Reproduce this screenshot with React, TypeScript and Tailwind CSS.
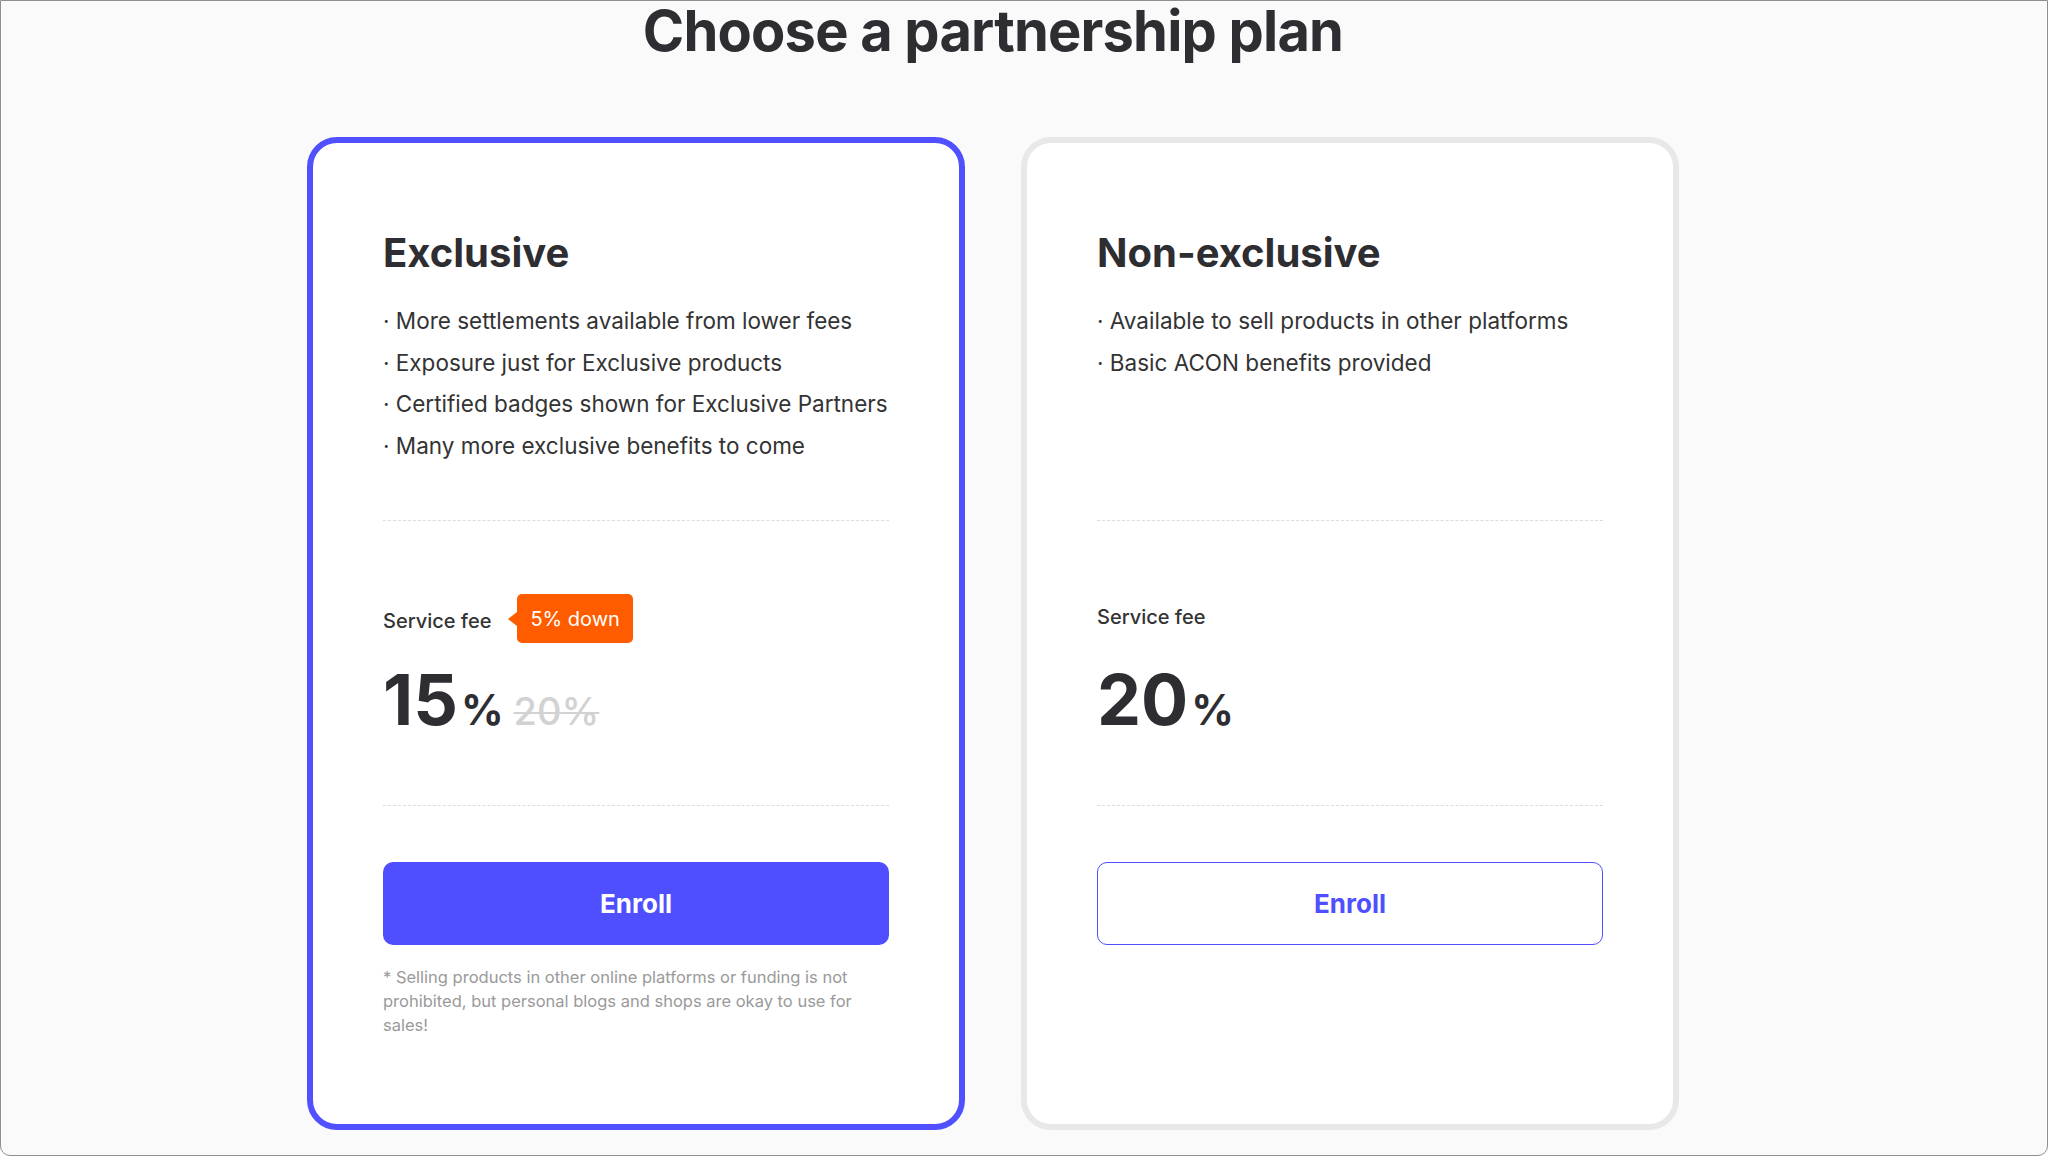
const exclusivePerks = [
  'More settlements available from lower fees',
  'Exposure just for Exclusive products',
  'Certified badges shown for Exclusive Partners',
  'Many more exclusive benefits to come',
];

const basicPerks = ['Available to sell products in other platforms', 'Basic ACON benefits provided'];

interface PlanCardProps {
  title: string;
  perks: string[];
  fee: string;
  oldFee?: string;
  discount?: string;
  selected?: boolean;
  note?: React.ReactNode;
}

function PlanCard({ title, perks, fee, oldFee, discount, selected, note }: PlanCardProps) {
  return (
    <div
      className={`w-[658px] rounded-[30px] border-[6px] bg-white px-[70px] pt-[90px] pb-[87px] flex flex-col ${
        selected ? 'border-[#5050ff]' : 'border-[#e8e8e8]'
      }`}
    >
      <h2 className="text-[40px] leading-none font-bold text-[#2d2d32]">{title}</h2>

      <ul className="mt-[27px] h-[220px] text-[22.5px] leading-[41.5px] text-[#333]">
        {perks.map((perk) => (
          <li key={perk}>· {perk}</li>
        ))}
      </ul>

      <div className="border-t border-dashed border-[#dcdcdc]" />

      <div className="mt-[73px] h-[49px] flex items-center">
        <span className={`text-[20px] font-medium text-[#333] ${discount ? 'mt-[4px]' : 'mb-[3px]'}`}>
          Service fee
        </span>
        {discount && (
          <span className="relative ml-[26px] h-[49px] px-[13px] rounded-[5px] bg-[#ff5c00] text-white text-[20px] flex items-center">
            <span className="absolute left-[-9px] top-1/2 -translate-y-1/2 w-0 h-0 border-y-[7px] border-y-transparent border-r-[9px] border-r-[#ff5c00]" />
            {discount}
          </span>
        )}
      </div>

      <div className="mt-[22px] h-[70px] flex items-baseline leading-none text-[#2d2d32]">
        <span className="text-[70px] font-bold">{fee}</span>
        <span className="ml-[3px] text-[42px] font-bold">%</span>
        {oldFee && (
          <span className="ml-[10px] text-[38px] font-medium text-[#d2d2d2] line-through decoration-[2px]">
            {oldFee}%
          </span>
        )}
      </div>

      <div className="mt-[70px] border-t border-dashed border-[#dcdcdc]" />

      <button
        className={`mt-[56px] h-[83px] w-full rounded-[10px] text-[26px] font-bold ${
          selected ? 'bg-[#4f4fff] text-white' : 'border border-[#4f4fff] bg-white text-[#4f4fff]'
        }`}
      >
        Enroll
      </button>

      {note && <p className="mt-[20px] text-[16.5px] leading-[24px] text-[#9a9a9a]">{note}</p>}
    </div>
  );
}

export default function App() {
  return (
    <div className="w-full h-[1156px] overflow-hidden bg-[#fafafa] border border-[#8f8f8f] rounded-b-[10px] font-['Inter','Noto_Sans',sans-serif]">
      <div className="flex flex-col items-center pr-[62px] pt-[2px]">
        <h1 className="text-[56px] leading-none font-bold tracking-[-0.8px] text-[#2d2d32]">
          Choose a partnership plan
        </h1>

        <div className="mt-[78px] flex gap-[56px]">
          <PlanCard
            title="Exclusive"
            perks={exclusivePerks}
            fee="15"
            oldFee="20"
            discount="5% down"
            selected
            note={
              <>
                * Selling products in other online platforms or funding is not
                <br />
                prohibited, but personal blogs and shops are okay to use for
                <br />
                sales!
              </>
            }
          />
          <PlanCard title="Non-exclusive" perks={basicPerks} fee="20" />
        </div>
      </div>
    </div>
  );
}
